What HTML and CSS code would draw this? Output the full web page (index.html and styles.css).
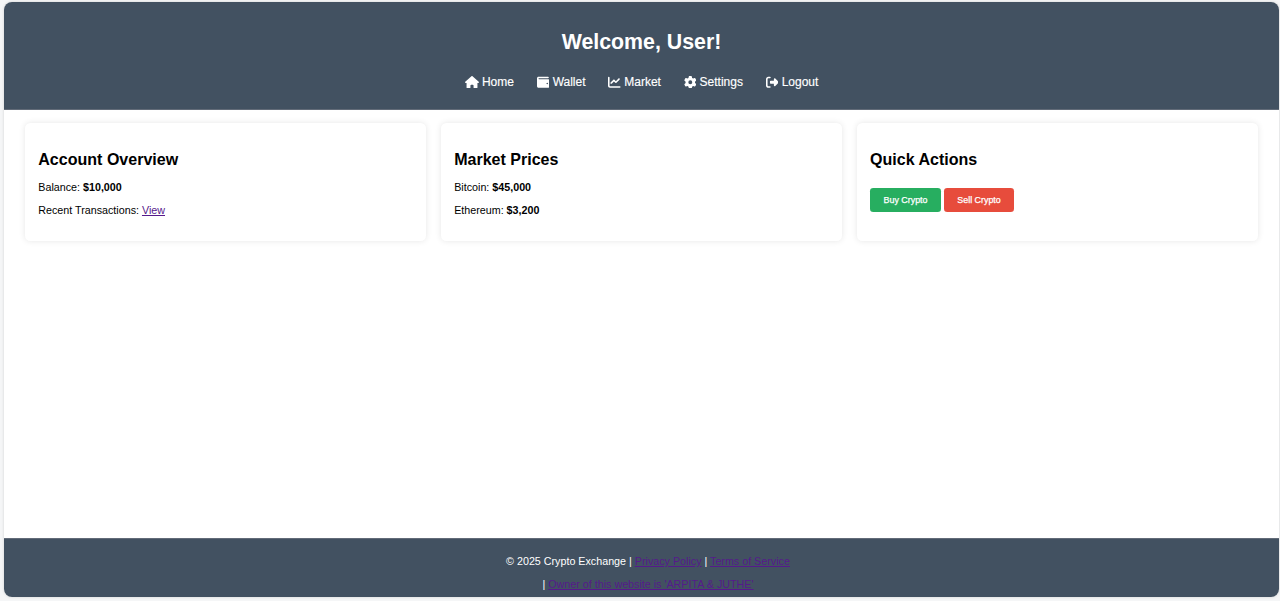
FILE: index.html
```html
<!DOCTYPE html>
<html lang="en">
<head>
<meta charset="UTF-8">
<title>Crypto Exchange</title>
<link rel="stylesheet" href="styles.css">
</head>
<body>
<div class="container">
  <header class="header">
    <h1 class="title">Welcome, User!</h1>
    <nav class="nav">
      <a class="nav-link"><svg class="icon home" viewBox="0 0 576 512"><path d="M575.800 255.500c0 18-15 32.100-32 32.100h-32l.7 160.200c0 2.700-.2 5.400-.5 8.100V472c0 22.100-17.900 40-40 40H392c-22.100 0-40-17.900-40-40v-88c0-17.700-14.300-32-32-32h-64c-17.700 0-32 14.300-32 32v88c0 22.100-17.900 40-40 40h-80c-22.100 0-40-17.900-40-40V287.600H32c-18 0-32-14-32-32.100 0-9 3-17 10-24L266.400 8c7-7 15-8 22-8s15 2 21 7l255.400 224.500c8 7 12 15 11 24z"/></svg>Home</a>
      <a class="nav-link"><svg class="icon" viewBox="0 0 512 512"><path fill-rule="evenodd" d="M64 32C28.700 32 0 60.700 0 96v320c0 35.300 28.700 64 64 64h384c35.300 0 64-28.700 64-64V192c0-35.300-28.700-64-64-64H80c-8.800 0-16-7.200-16-16s7.200-16 16-16h368c17.700 0 32-14.300 32-32s-14.300-32-32-32H64zM416 272a32 32 0 1 1 0 64 32 32 0 1 1 0-64z"/></svg>Wallet</a>
      <a class="nav-link"><svg class="icon" viewBox="0 0 512 512"><path d="M64 64c0-17.700-14.300-32-32-32S0 46.300 0 64v336c0 44.200 35.800 80 80 80h400c17.700 0 32-14.300 32-32s-14.300-32-32-32H80c-8.800 0-16-7.200-16-16V64zm406.600 86.600c12.500-12.500 12.500-32.800 0-45.300s-32.800-12.500-45.300 0L320 210.700l-57.400-57.300c-12.500-12.500-32.800-12.500-45.300 0l-112 112c-12.500 12.500-12.500 32.800 0 45.300s32.800 12.500 45.300 0L240 221.300l57.400 57.400c12.500 12.500 32.800 12.500 45.300 0l128-128z"/></svg>Market</a>
      <a class="nav-link"><svg class="icon" viewBox="0 0 512 512"><path fill-rule="evenodd" d="M495.900 166.600c3.200 8.700.5 18.400-6.400 24.600l-43.300 39.400c1.100 8.300 1.700 16.800 1.700 25.400s-.6 17.100-1.700 25.400l43.300 39.400c6.900 6.200 9.600 15.900 6.400 24.600-4.400 11.900-9.700 23.300-15.800 34.300l-4.700 8.100c-6.600 11-14 21.400-22.100 31.200-5.900 7.200-15.700 9.600-24.500 6.800l-55.700-17.700c-13.400 10.300-28.200 18.900-44 25.400l-12.500 57.100c-2 9.100-9 16.300-18.200 17.800-13.800 2.300-28 3.500-42.500 3.500s-28.700-1.200-42.500-3.500c-9.200-1.500-16.200-8.700-18.200-17.800l-12.500-57.100c-15.800-6.500-30.600-15.100-44-25.400l-55.600 17.800c-8.800 2.800-18.600.3-24.500-6.800-8.100-9.800-15.500-20.200-22.100-31.200l-4.700-8.100c-6.100-11-11.400-22.400-15.800-34.300-3.200-8.700-.5-18.400 6.400-24.600l43.300-39.400C64.600 273.100 64 264.600 64 256s.6-17.100 1.700-25.400l-43.300-39.400c-6.900-6.200-9.600-15.900-6.400-24.600 4.400-11.900 9.700-23.300 15.800-34.300l4.700-8.100c6.600-11 14-21.400 22.100-31.200 5.900-7.200 15.700-9.600 24.500-6.800l55.700 17.700c13.400-10.300 28.200-18.900 44-25.400l12.500-57.100c2-9.100 9-16.300 18.200-17.800C227.300 1.200 241.500 0 256 0s28.700 1.200 42.500 3.500c9.200 1.500 16.200 8.700 18.200 17.800l12.500 57.100c15.800 6.500 30.600 15.100 44 25.400l55.700-17.700c8.800-2.800 18.600-.3 24.500 6.800 8.100 9.800 15.500 20.200 22.100 31.200l4.700 8.100c6.100 11 11.400 22.400 15.700 34.400zM256 336a80 80 0 1 0 0-160 80 80 0 1 0 0 160z"/></svg>Settings</a>
      <a class="nav-link"><svg class="icon" viewBox="0 0 512 512"><path d="M377.900 105.900l122.800 122.800c7.200 7.200 11.300 17.100 11.300 27.300s-4.100 20.100-11.300 27.300L377.900 406.100c-6.400 6.400-15 9.900-24 9.900-18.700 0-33.900-15.200-33.900-33.900V320H192c-17.700 0-32-14.300-32-32v-64c0-17.700 14.300-32 32-32h128v-62.100c0-18.700 15.200-33.900 33.900-33.900 9 0 17.600 3.600 24 9.900zM160 96H96c-17.700 0-32 14.300-32 32v256c0 17.700 14.300 32 32 32h64c17.700 0 32 14.300 32 32s-14.300 32-32 32H96c-53 0-96-43-96-96V128c0-53 43-96 96-96h64c17.700 0 32 14.300 32 32s-14.300 32-32 32z"/></svg>Logout</a>
    </nav>
  </header>
  <main class="cards">
    <section class="card">
      <h2>Account Overview</h2>
      <p>Balance: <strong>$10,000</strong></p>
      <p>Recent Transactions: <a class="link">View</a></p>
    </section>
    <section class="card">
      <h2>Market Prices</h2>
      <p>Bitcoin: <strong>$45,000</strong></p>
      <p>Ethereum: <strong>$3,200</strong></p>
    </section>
    <section class="card">
      <h2>Quick Actions</h2>
      <div class="actions">
        <button class="btn buy">Buy Crypto</button>
        <button class="btn sell">Sell Crypto</button>
      </div>
    </section>
  </main>
  <footer class="footer">
    <p>© 2025 Crypto Exchange | <a class="link">Privacy Policy</a> | <a class="link">Terms of Service</a></p>
    <p>| <a class="link">Owner of this website is 'ARPITA &amp; JUTHE'</a></p>
  </footer>
</div>
</body>
</html>
```
FILE: styles.css
```css
* { box-sizing: border-box; }
body {
  margin: 0;
  height: 601px;
  padding: 2px 1px 4px 4px;
  background: #f5f6f7;
  font-family: "Liberation Sans", Arial, sans-serif;
  font-size: 10.72px;
  line-height: 12px;
  color: #000;
  overflow: hidden;
}
.container {
  height: 595px;
  display: flex;
  flex-direction: column;
  background: #fff;
  border-radius: 8px;
  box-shadow: 0 0 3px rgba(0, 0, 0, 0.15);
  overflow: hidden;
}
.header {
  height: 108px;
  padding-top: 28px;
  background: #425161;
  border-bottom: 1px solid #626b78;
  color: #fff;
  text-align: center;
}
.title {
  margin: 0;
  font-size: 21.33px;
  line-height: 25px;
}
.nav {
  display: flex;
  justify-content: center;
  gap: 22.8px;
  margin-top: 20px;
  font-size: 12px;
  line-height: 14px;
  -webkit-text-stroke: 0.15px #fff;
}
.nav-link {
  display: flex;
  align-items: center;
  gap: 3.3px;
}
.icon {
  width: 12.6px;
  height: 12.6px;
  fill: #fff;
}
.icon.home { width: 14px; }
.cards {
  flex: 1;
  display: grid;
  grid-template-columns: repeat(3, 1fr);
  align-items: start;
  gap: 14.67px;
  padding: 13px 21px;
}
.card {
  height: 117.5px;
  padding: 13.3px;
  border-radius: 5.3px;
  background: #fff;
  box-shadow: 0 0 6.7px rgba(0, 0, 0, 0.1);
}
.card h2 {
  margin: 14px 0 12.6px;
  font-size: 16.05px;
  line-height: 18.5px;
}
.card p { margin: 0 0 10.67px; }
.link {
  color: #551a8b;
  text-decoration: underline;
}
.actions {
  display: flex;
  gap: 3px;
  padding-top: 7px;
}
.btn {
  height: 24px;
  padding: 0;
  border: 0;
  border-radius: 3.3px;
  color: #fff;
  font: 8.89px/10px "Liberation Sans", Arial, sans-serif;
  -webkit-text-stroke: 0.25px #fff;
}
.buy { width: 71px; background: #27ae60; }
.sell { width: 70px; background: #e74c3c; }
.footer {
  height: 59px;
  padding: 16px 0 0 13px;
  border-top: 1px solid #626b78;
  background: #425161;
  color: #fff;
  text-align: center;
}
.footer p { margin: 0 0 10.67px; }
```
